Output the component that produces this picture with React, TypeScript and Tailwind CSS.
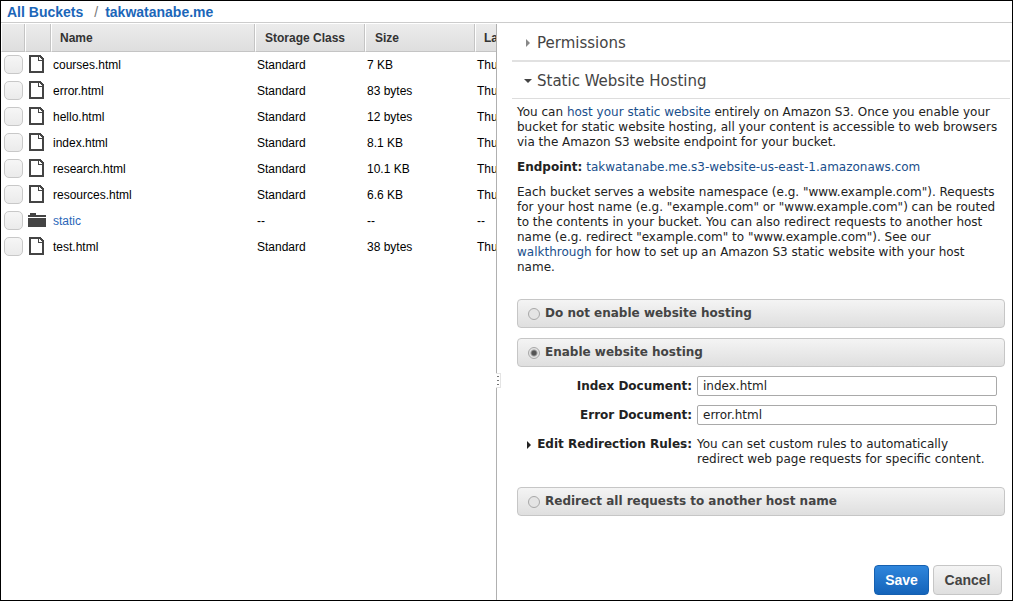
import { useState } from 'react'
import type { ReactNode } from 'react'

type Item = { name: string; storage: string; size: string; modified: string; folder?: boolean }

const items: Item[] = [
  { name: 'courses.html', storage: 'Standard', size: '7 KB', modified: 'Thu' },
  { name: 'error.html', storage: 'Standard', size: '83 bytes', modified: 'Thu' },
  { name: 'hello.html', storage: 'Standard', size: '12 bytes', modified: 'Thu' },
  { name: 'index.html', storage: 'Standard', size: '8.1 KB', modified: 'Thu' },
  { name: 'research.html', storage: 'Standard', size: '10.1 KB', modified: 'Thu' },
  { name: 'resources.html', storage: 'Standard', size: '6.6 KB', modified: 'Thu' },
  { name: 'static', storage: '--', size: '--', modified: '--', folder: true },
  { name: 'test.html', storage: 'Standard', size: '38 bytes', modified: 'Thu' },
]

function FileIcon() {
  return (
    <svg className="ml-1 block" width="15" height="18" viewBox="0 0 15 18" shapeRendering="crispEdges" aria-hidden="true">
      <path fill="#444" fillRule="evenodd" d="M0 0H12V1H13V2H14V3H15V18H0ZM2 2V16H13V6H9V2ZM10 2V5H13V4H12V3H11V2Z" />
    </svg>
  )
}

function FolderIcon() {
  return (
    <svg className="ml-[3px] block" width="18" height="14" viewBox="0 0 18 14" shapeRendering="crispEdges" aria-hidden="true">
      <path fill="#444" d="M2 0H8V2H18V4H0V2H2ZM0 5H18V14H0Z" />
    </svg>
  )
}

function Triangle({ open = false, color = '#444' }: { open?: boolean; color?: string }) {
  return (
    <svg className="block shrink-0" width="8" height="8" viewBox="0 0 8 8" aria-hidden="true">
      <path fill={color} d={open ? 'M0 2H8L4 6Z' : 'M2 0L6 4L2 8Z'} />
    </svg>
  )
}

const headCell =
  'h-7 border-r border-b border-l border-r-[#c4c4c4] border-b-[#c4c4c4] border-l-white bg-linear-to-b from-[#ececec] to-[#dedede] p-0 text-left font-bold text-[#333]'

function Option({
  label,
  value,
  current,
  onPick,
}: {
  label: string
  value: string
  current: string
  onPick: (v: string) => void
}) {
  return (
    <label className="flex h-[29px] items-center gap-[5px] rounded border border-[#c6c6c6] bg-linear-to-b from-[#f4f4f4] to-[#dfdfdf] pl-[10px] font-bold text-[#444]">
      <input
        type="radio"
        name="hosting"
        value={value}
        checked={current === value}
        onChange={() => onPick(value)}
        className="size-3 appearance-none rounded-full border border-[#a8a8a8] bg-[#e4e4e4] checked:bg-[radial-gradient(circle,#555_0,#555_2px,#e4e4e4_4px)]"
      />
      <span>{label}</span>
    </label>
  )
}

function Field({ id, label, initial }: { id: string; label: string; initial: string }) {
  return (
    <div className="flex h-5 items-center gap-[5px]">
      <label htmlFor={id} className="w-[175px] shrink-0 text-right font-bold">
        {label}
      </label>
      <input
        id={id}
        defaultValue={initial}
        className="h-5 min-w-0 flex-1 rounded-xs border border-[#a9a9a9] bg-white px-[5px]"
      />
    </div>
  )
}

function Link({ children }: { children: ReactNode }) {
  return (
    <a href="#" className="text-[#1a4f8c]">
      {children}
    </a>
  )
}

export default function App() {
  const [mode, setMode] = useState('enable')

  return (
    <div className="flex min-h-screen flex-col border border-black bg-white font-['Liberation_Sans',Arial,sans-serif] text-xs text-black">
      <nav className="flex h-[22px] items-center border-b border-[#ccc] pl-[6px] text-sm leading-5 font-bold text-[#1b66b9]">
        <a href="#">All Buckets</a>
        <span className="mr-[7px] ml-[11px] font-normal text-[#777]">/</span>
        <a href="#">takwatanabe.me</a>
      </nav>

      <div className="flex flex-1 pt-px">
        <section className="shrink-0 basis-[495px] overflow-hidden">
          <table className="w-[640px] table-fixed border-separate border-spacing-0">
            <colgroup>
              <col className="w-6" />
              <col className="w-[26px]" />
              <col className="w-[204px]" />
              <col className="w-[110px]" />
              <col className="w-[110px]" />
              <col />
            </colgroup>
            <thead>
              <tr>
                <th className={headCell} />
                <th className={headCell} />
                <th className={headCell + ' pl-2'}>Name</th>
                <th className={headCell + ' pl-[9px]'}>Storage Class</th>
                <th className={headCell + ' pl-[9px]'}>Size</th>
                <th className={headCell + ' pl-2'}>Last Modified</th>
              </tr>
            </thead>
            <tbody>
              {items.map((item) => (
                <tr key={item.name}>
                  <td className="h-[26px] p-0 pb-[2px] pl-[3px]">
                    <input
                      type="checkbox"
                      aria-label={item.name}
                      className="block size-[19px] appearance-none rounded-[5px] border border-[#c8c8c8] bg-linear-to-b from-[#f6f6f6] to-[#ebebeb]"
                    />
                  </td>
                  <td className="p-0 pb-[2px]">{item.folder ? <FolderIcon /> : <FileIcon />}</td>
                  <td className="p-0 pl-[2px]">
                    {item.folder ? (
                      <a href="#" className="text-[#2a66b8]">
                        {item.name}
                      </a>
                    ) : (
                      item.name
                    )}
                  </td>
                  <td className="p-0 pl-[2px]">{item.storage}</td>
                  <td className="p-0 pl-[2px]">{item.size}</td>
                  <td className="p-0 pl-[2px]">{item.modified}</td>
                </tr>
              ))}
            </tbody>
          </table>
        </section>

        <section className="relative flex min-w-0 flex-1 flex-col border-l border-[#b0b0b0] pr-[2px] pl-[15px] font-['DejaVu_Sans',Verdana,sans-serif] leading-[15px] text-[#222]">
          <div className="absolute top-[349px] -left-px flex h-[15px] w-[5px] flex-col items-start justify-between border border-l-0 border-[#e4e4e4] bg-white py-[2px] pl-px">
            <span className="h-px w-[2px] bg-[#777]" />
            <span className="h-px w-[2px] bg-[#777]" />
            <span className="h-px w-[2px] bg-[#777]" />
          </div>

          <h2 className="h-[38px] border-b-2 border-[#e1e1e1] text-[15px] text-[#444]">
            <button type="button" className="flex h-full items-center gap-[5px] pt-[2px] pl-3">
              <Triangle color="#888" />
              Permissions
            </button>
          </h2>
          <h2 className="h-[37px] border-b border-[#ddd] text-[15px] text-[#444]">
            <button type="button" className="flex h-full items-center gap-[5px] pt-[2px] pl-3">
              <Triangle open />
              Static Website Hosting
            </button>
          </h2>

          <div className="flex flex-1 flex-col px-[5px] pt-[6px] pb-[5px]">
            <div className="flex flex-col gap-[10px]">
              <p>
                You can <Link>host your static website</Link> entirely on Amazon S3. Once you enable your bucket for
                static website hosting, all your content is accessible to web browsers via the Amazon S3 website
                endpoint for your bucket.
              </p>
              <p>
                <b>Endpoint:</b> <Link>takwatanabe.me.s3-website-us-east-1.amazonaws.com</Link>
              </p>
              <p>
                Each bucket serves a website namespace (e.g. "www.example.com"). Requests for your host name (e.g.
                "example.com" or "www.example.com") can be routed to the contents in your bucket. You can also redirect
                requests to another host name (e.g. redirect "example.com" to "www.example.com"). See our{' '}
                <Link>walkthrough</Link> for how to set up an Amazon S3 static website with your host name.
              </p>
            </div>

            <form className="flex flex-1 flex-col pt-6" onSubmit={(e) => e.preventDefault()}>
              <Option label="Do not enable website hosting" value="off" current={mode} onPick={setMode} />
              <div className="h-[10px]" />
              <Option label="Enable website hosting" value="enable" current={mode} onPick={setMode} />

              <div className="flex flex-col gap-[9px] pt-[9px] pr-2 pb-5">
                <Field id="index-document" label="Index Document:" initial="index.html" />
                <Field id="error-document" label="Error Document:" initial="error.html" />
                <div className="flex gap-[5px] pt-[3px]">
                  <button
                    type="button"
                    className="flex w-[175px] shrink-0 items-center justify-between self-start pl-2 font-bold whitespace-nowrap"
                  >
                    <Triangle color="#222" />
                    Edit Redirection Rules:
                  </button>
                  <p>You can set custom rules to automatically redirect web page requests for specific content.</p>
                </div>
              </div>

              <Option label="Redirect all requests to another host name" value="redirect" current={mode} onPick={setMode} />

              <div className="mt-auto flex justify-end gap-1 pr-[3px] font-['Liberation_Sans',Arial,sans-serif] text-sm font-bold">
                <button
                  type="submit"
                  className="h-[30px] w-[55px] rounded border border-[#1560b0] bg-linear-to-b from-[#2f86dc] to-[#1464ba] text-white"
                >
                  Save
                </button>
                <button
                  type="button"
                  className="h-[30px] w-[69px] rounded border border-[#c6c6c6] bg-linear-to-b from-[#f4f4f4] to-[#dfdfdf] text-[#444]"
                >
                  Cancel
                </button>
              </div>
            </form>
          </div>
        </section>
      </div>
    </div>
  )
}
